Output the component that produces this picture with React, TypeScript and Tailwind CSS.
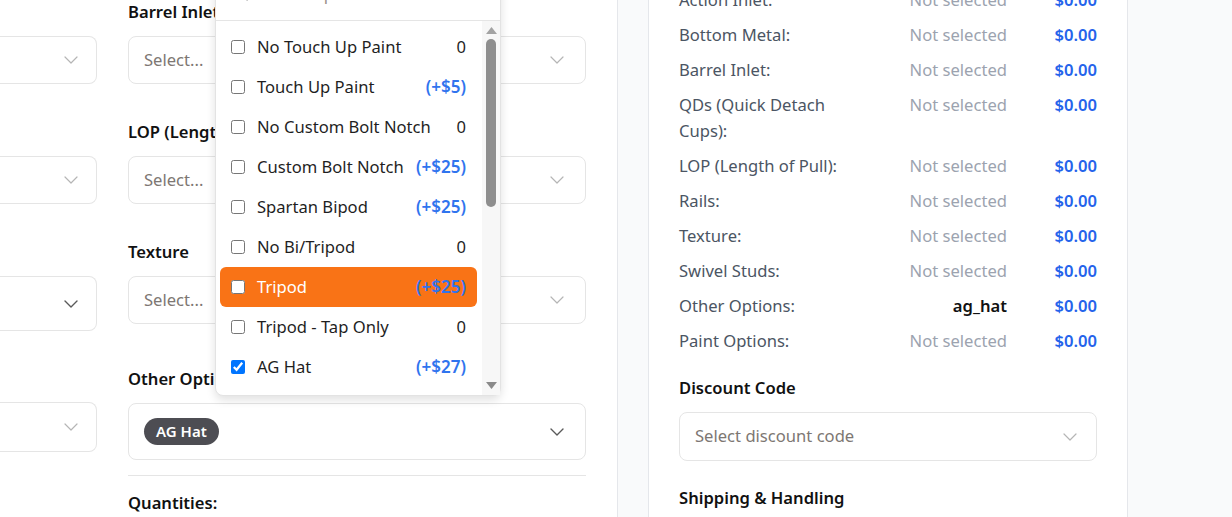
import { ChevronDown, Search } from "lucide-react";

type Opcao = { nome: string; preco: string; ativo?: boolean; marcado?: boolean };

const opcoes: Opcao[] = [
  { nome: "No Touch Up Paint", preco: "0" },
  { nome: "Touch Up Paint", preco: "(+$5)" },
  { nome: "No Custom Bolt Notch", preco: "0" },
  { nome: "Custom Bolt Notch", preco: "(+$25)" },
  { nome: "Spartan Bipod", preco: "(+$25)" },
  { nome: "No Bi/Tripod", preco: "0" },
  { nome: "Tripod", preco: "(+$25)", ativo: true },
  { nome: "Tripod - Tap Only", preco: "0" },
  { nome: "AG Hat", preco: "(+$27)", marcado: true },
];

const resumo: { label: string; valor: string }[] = [
  { label: "Action Inlet:", valor: "" },
  { label: "Bottom Metal:", valor: "" },
  { label: "Barrel Inlet:", valor: "" },
  { label: "QDs (Quick Detach Cups):", valor: "" },
  { label: "LOP (Length of Pull):", valor: "" },
  { label: "Rails:", valor: "" },
  { label: "Texture:", valor: "" },
  { label: "Swivel Studs:", valor: "" },
  { label: "Other Options:", valor: "ag_hat" },
  { label: "Paint Options:", valor: "" },
];

function Chevron({ escuro }: { escuro?: boolean }) {
  return (
    <ChevronDown
      size={24}
      strokeWidth={escuro ? 1.4 : 1.2}
      className={escuro ? "text-[#5a5a5a]" : "text-[#b5b5b5]"}
    />
  );
}

// coluna cortada à esquerda (a página está rolada na horizontal)
function SelectCortado({ altura, escuro }: { altura: string; escuro?: boolean }) {
  return (
    <div
      className={`flex items-center justify-end pr-[13px] bg-white border border-l-0 border-[#e5e5e5] rounded-r-lg ${altura}`}
    >
      <Chevron escuro={escuro} />
    </div>
  );
}

function SelectVazio() {
  return (
    <div className="flex items-center justify-between h-12 pl-[15px] pr-[16px] bg-white border border-[#e5e5e5] rounded-lg">
      <span className="text-[#7d7773]">Select...</span>
      <Chevron />
    </div>
  );
}

function Campo({ label, children }: { label: string; children: React.ReactNode }) {
  return (
    <div className="flex flex-col">
      <label className="h-6 leading-6 mb-3 font-semibold text-[#111] whitespace-nowrap">
        {label}
      </label>
      {children}
    </div>
  );
}

function Dropdown() {
  return (
    <div className="absolute left-[215px] top-[-33px] w-[286px] h-[429px] flex flex-col bg-white border border-[#e3e3e3] rounded-b-lg shadow-[0_4px_10px_rgba(0,0,0,0.12)]">
      <div className="h-[53px] shrink-0 flex items-center gap-2 px-[18px] border-b border-[#e5e5e5]">
        <Search size={15} className="text-[#9a9a9a]" />
        <span className="text-[#9a8f8a]">Search options...</span>
      </div>
      <div className="flex flex-1">
        <div className="flex-1 flex flex-col pt-[6px] pl-[4px] pr-[5px]">
          {opcoes.map((o) => (
            <div
              key={o.nome}
              className={`flex items-center h-10 pl-[11px] pr-[11px] rounded-md ${
                o.ativo ? "bg-[#f97316]" : ""
              }`}
            >
              <input
                type="checkbox"
                checked={!!o.marcado}
                readOnly
                className="w-[14px] h-[14px] m-0 shrink-0"
              />
              <span
                className={`ml-[12px] flex-1 whitespace-nowrap ${
                  o.ativo ? "text-white" : "text-[#1f1f1f]"
                }`}
              >
                {o.nome}
              </span>
              <span
                className={
                  o.preco === "0"
                    ? "text-[#1f1f1f]"
                    : "text-[#3074ee] text-[17px] font-semibold"
                }
              >
                {o.preco}
              </span>
            </div>
          ))}
        </div>
        {/* barra de rolagem */}
        <div className="w-[18px] flex flex-col items-center bg-[#f7f7f7] pt-[6px] pb-[6px]">
          <svg width="11" height="7" viewBox="0 0 11 7">
            <polygon points="5.5,0 11,7 0,7" fill="#a3a3a3" />
          </svg>
          <div className="mt-[5px] w-[10px] h-[168px] rounded-full bg-[#8e8e8e]" />
          <div className="flex-1" />
          <svg width="11" height="7" viewBox="0 0 11 7">
            <polygon points="0,0 11,0 5.5,7" fill="#8a8a8a" />
          </svg>
        </div>
      </div>
    </div>
  );
}

export default function App() {
  return (
    <div
      className="relative w-[1232px] h-[517px] overflow-hidden bg-[#f9fafb] flex text-[16.6px]"
      style={{ fontFamily: '"Noto Sans", "Open Sans", sans-serif' }}
    >
      {/* painel de opções */}
      <div className="w-[618px] shrink-0 bg-white border-r border-[#e5e7eb]">
        <div className="flex flex-col gap-9">
          <div className="flex gap-[31px]">
            <div className="w-[97px] pt-9">
              <SelectCortado altura="h-12" />
            </div>
            <div className="w-[458px]">
              <Campo label="Barrel Inlet">
                <SelectVazio />
              </Campo>
            </div>
          </div>
          <div className="flex gap-[31px]">
            <div className="w-[97px] pt-9">
              <SelectCortado altura="h-12" />
            </div>
            <div className="w-[458px]">
              <Campo label="LOP (Length of Pull)">
                <SelectVazio />
              </Campo>
            </div>
          </div>
          <div className="flex gap-[31px]">
            <div className="w-[97px] pt-9">
              <SelectCortado altura="h-[55px]" escuro />
            </div>
            <div className="w-[458px]">
              <Campo label="Texture">
                <SelectVazio />
              </Campo>
            </div>
          </div>
          <div className="flex gap-[31px]">
            <div className="w-[97px] pt-[35px]">
              <SelectCortado altura="h-[50px]" />
            </div>
            <div className="w-[458px]">
              <Campo label="Other Options">
                <div className="flex items-center justify-between h-[57px] pl-[15px] pr-[16px] bg-white border border-[#e5e5e5] rounded-lg">
                  <span className="px-[12px] h-[27px] leading-[27px] rounded-full bg-[#4d4d53] text-white text-[15px] font-semibold">
                    AG Hat
                  </span>
                  <Chevron escuro />
                </div>
              </Campo>
              <div className="mt-[15px] border-t border-[#e5e5e5]" />
              <div className="mt-[15px] font-semibold text-[#111]">Quantities:</div>
            </div>
          </div>
        </div>
      </div>

      {/* resumo do pedido */}
      <div className="ml-[30px] w-[480px] shrink-0 bg-white border-x border-[#e5e7eb] px-[30px]">
        <div className="-mt-[13px] flex flex-col gap-[9px]">
          {resumo.map((r) => (
            <div key={r.label} className="grid grid-cols-[180px_1fr_90px] leading-[26px]">
              <span className="text-[#4b5563]">{r.label}</span>
              <span
                className={`text-right ${
                  r.valor ? "text-[#111] font-semibold" : "text-[#9ca3af]"
                }`}
              >
                {r.valor || "Not selected"}
              </span>
              <span className="text-right text-[#2563eb] font-semibold">$0.00</span>
            </div>
          ))}
        </div>
        <div className="mt-[22px] h-6 leading-6 font-semibold text-[#111]">Discount Code</div>
        <div className="mt-3 flex items-center justify-between h-[49px] pl-[15px] pr-[14px] border border-[#e5e5e5] rounded-lg">
          <span className="text-[#7d7773]">Select discount code</span>
          <Chevron />
        </div>
        <div className="mt-[25px] h-6 leading-6 font-semibold text-[#111]">Shipping &amp; Handling</div>
      </div>

      <Dropdown />
    </div>
  );
}
